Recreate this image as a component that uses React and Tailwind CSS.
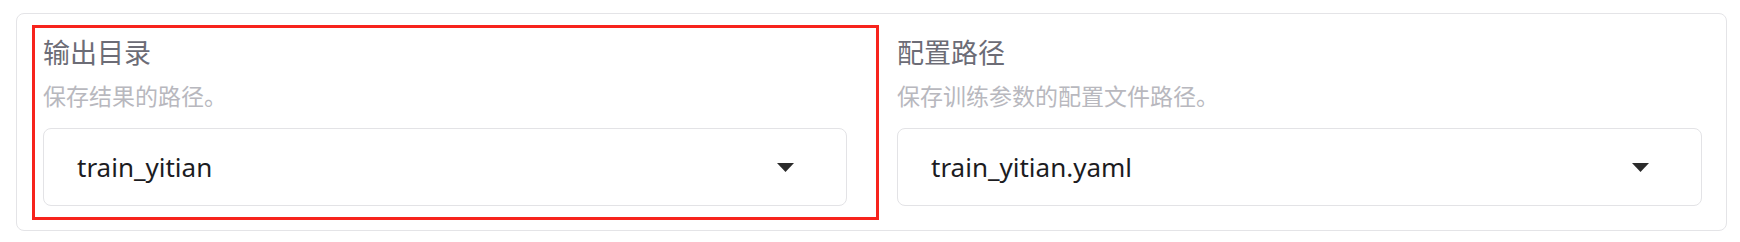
import React from "react";

function Caret() {
  return (
    <svg width="17" height="9" viewBox="0 0 17 9" className="shrink-0">
      <path d="M0 0 L17 0 L8.5 9 Z" fill="#2b2b2b" />
    </svg>
  );
}

function Field({ label, info, value }) {
  return (
    <div className="flex flex-col">
      <div className="text-[27px] leading-[36px] text-[#6c6c76]">{label}</div>
      <div className="mt-[9px] text-[23px] leading-[32px] text-[#b8b8be]">{info}</div>
      <div className="mt-[16px] h-[78px] flex items-center justify-between bg-white border border-[#e3e3e6] rounded-[8px] pl-[33px] pr-[52px]">
        <span className="text-[26px] text-[#1c1c1f]">{value}</span>
        <Caret />
      </div>
    </div>
  );
}

export default function App() {
  return (
    <div
      className="w-full h-[242px] bg-white pt-[13px]"
      style={{ fontFamily: '"Noto Sans", "Noto Sans CJK SC", sans-serif' }}
    >
      <div className="ml-[16px] w-[1711px] border border-[#e4e4e7] rounded-[8px] pt-[11px] pb-[10px] pl-[15px] pr-[24px] flex">
        {/* selected column */}
        <div className="w-[847px] border-[3px] border-[#f7231c] pt-[7px] pl-[8px] pr-[29px] pb-[11px]">
          <Field label="输出目录" info="保存结果的路径。" value="train_yitian" />
        </div>
        <div className="flex-1 ml-[18px] pt-[10px]">
          <Field label="配置路径" info="保存训练参数的配置文件路径。" value="train_yitian.yaml" />
        </div>
      </div>
    </div>
  );
}
